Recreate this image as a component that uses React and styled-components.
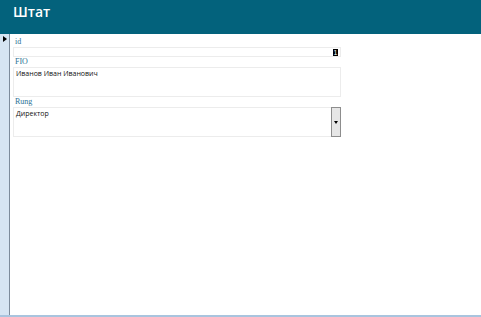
import React from "react";
import styled, { createGlobalStyle } from "styled-components";

const Global = createGlobalStyle`
  html, body { margin: 0; padding: 0; background: #ffffff; }
  #root { width: 481px; height: 317px; }
`;

const Page = styled.div`
  width: 481px;
  height: 317px;
  display: flex;
  flex-direction: column;
  background: #ffffff;
  overflow: hidden;
`;

const Header = styled.div`
  height: 34px;
  flex: none;
  background: #03627c;
  padding: 2px 0 0 13px;
  box-sizing: border-box;
`;

const Title = styled.div`
  color: #ffffff;
  font-family: "Open Sans", "Noto Sans", sans-serif;
  font-size: 14px;
  line-height: 20px;
  font-weight: 600;
`;

const Body = styled.div`
  flex: 1;
  display: flex;
  border-bottom: 2px solid #a9c4de;
`;

const Selector = styled.div`
  width: 9px;
  flex: none;
  background: #d6e5f3;
  border-right: 1px solid #7d8c9c;
  position: relative;
`;

const Arrow = styled.div`
  position: absolute;
  left: 3px;
  top: 2px;
  width: 0;
  height: 0;
  border-top: 3px solid transparent;
  border-bottom: 3px solid transparent;
  border-left: 4px solid #000;
`;

const Form = styled.div`
  flex: 1;
  display: flex;
  flex-direction: column;
  padding: 3px 0 0 3px;
`;

const FieldGroup = styled.div`
  width: 328px;
  display: flex;
  flex-direction: column;
`;

const Label = styled.div`
  height: 10px;
  font-family: "Liberation Serif", "DejaVu Serif", serif;
  font-size: 8px;
  line-height: 10px;
  color: #2c7295;
  padding-left: 2px;
`;

const Box = styled.div`
  height: ${(p) => p.$h}px;
  box-sizing: border-box;
  border: 1px solid #ececec;
  display: flex;
  justify-content: ${(p) => (p.$right ? "flex-end" : "flex-start")};
  align-items: flex-start;
  position: relative;
  font-family: "Open Sans", "Noto Sans", sans-serif;
  font-size: 7px;
  line-height: 10px;
  color: #111;
  padding: 1px 2px 0 2px;
`;

const Selected = styled.span`
  background: #000;
  color: #fff;
  font-family: "Liberation Sans", sans-serif;
  font-size: 7px;
  line-height: 7px;
  padding: 0 0.5px;
`;

const DropButton = styled.div`
  position: absolute;
  right: -1px;
  top: -1px;
  width: 10px;
  height: 30px;
  box-sizing: border-box;
  background: #e6e6e6;
  border: 1px solid #8d8d8d;
  display: flex;
  align-items: center;
  justify-content: center;
`;

const DropArrow = styled.div`
  width: 0;
  height: 0;
  border-left: 2.5px solid transparent;
  border-right: 2.5px solid transparent;
  border-top: 3px solid #000;
`;

export default function App() {
  return (
    <>
      <Global />
      <Page>
        <Header>
          <Title>Штат</Title>
        </Header>
        <Body>
          <Selector>
            <Arrow />
          </Selector>
          <Form>
            <FieldGroup>
              <Label>id</Label>
              <Box $h={10} $right>
                <Selected>1</Selected>
              </Box>
              <Label>FIO</Label>
              <Box $h={30}>Иванов Иван Иванович</Box>
              <Label>Rung</Label>
              <Box $h={30}>
                Директор
                <DropButton>
                  <DropArrow />
                </DropButton>
              </Box>
            </FieldGroup>
          </Form>
        </Body>
      </Page>
    </>
  );
}
